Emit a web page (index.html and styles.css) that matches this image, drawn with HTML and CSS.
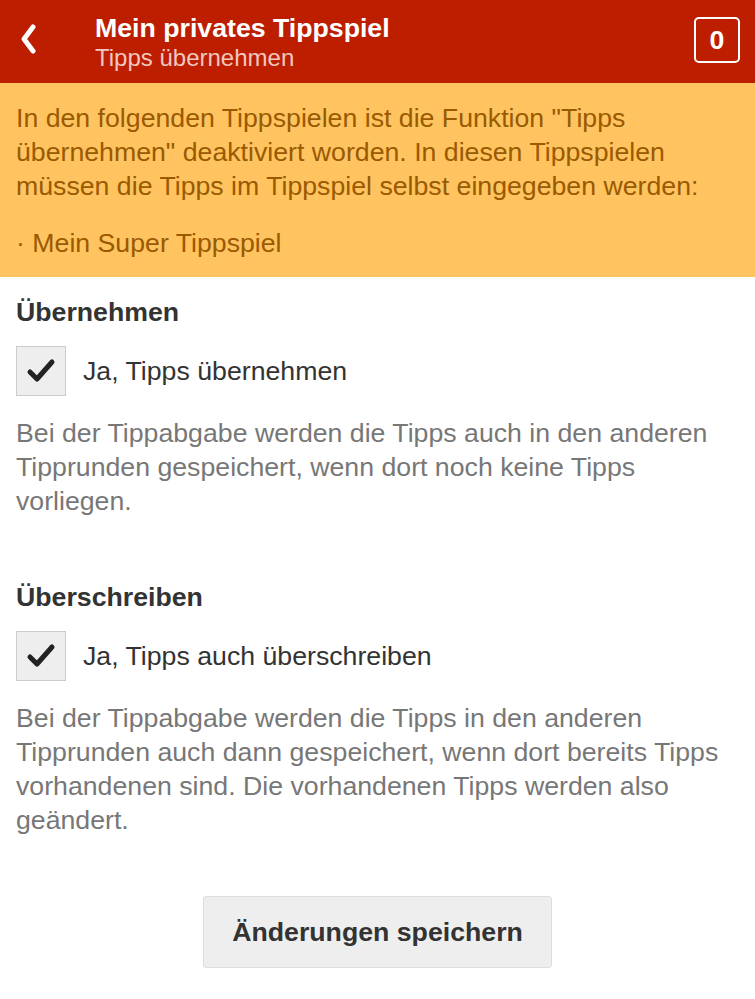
FILE: index.html
```html
<!DOCTYPE html>
<html lang="de">
<head>
    <meta charset="UTF-8" />
    <meta name="viewport" content="width=device-width, initial-scale=1.0" />
    <title>Tipps übernehmen</title>
    <link rel="stylesheet" href="styles.css">
</head>
<body>
    <div class="header">
        <a class="back" href="#">
            <svg width="18" height="32" viewBox="0 0 18 32"><path d="M14 4 L5 16 L14 28" fill="none" stroke="#fff" stroke-width="5" stroke-linecap="round" stroke-linejoin="round"/></svg>
        </a>
        <div class="titles">
            <div class="title">Mein privates Tippspiel</div>
            <div class="subtitle">Tipps übernehmen</div>
        </div>
        <div class="badge">0</div>
    </div>

    <div class="warning">
        <p>In den folgenden Tippspielen ist die Funktion "Tipps übernehmen" deaktiviert worden. In diesen Tippspielen müssen die Tipps im Tippspiel selbst eingegeben werden:</p>
        <p>· Mein Super Tippspiel</p>
    </div>

    <div class="section">
        <h2>Übernehmen</h2>
        <label class="check">
            <span class="box"><svg width="30" height="26" viewBox="0 0 30 26"><path d="M4 14 L11 21 L26 4" fill="none" stroke="#222" stroke-width="5" stroke-linecap="round" stroke-linejoin="round"/></svg></span>
            <span>Ja, Tipps übernehmen</span>
        </label>
        <p class="hint">Bei der Tippabgabe werden die Tipps auch in den anderen Tipprunden gespeichert, wenn dort noch keine Tipps vorliegen.</p>
    </div>

    <div class="section">
        <h2>Überschreiben</h2>
        <label class="check">
            <span class="box"><svg width="30" height="26" viewBox="0 0 30 26"><path d="M4 14 L11 21 L26 4" fill="none" stroke="#222" stroke-width="5" stroke-linecap="round" stroke-linejoin="round"/></svg></span>
            <span>Ja, Tipps auch überschreiben</span>
        </label>
        <p class="hint">Bei der Tippabgabe werden die Tipps in den anderen Tipprunden auch dann gespeichert, wenn dort bereits Tipps vorhandenen sind. Die vorhandenen Tipps werden also geändert.</p>
    </div>

    <div class="actions">
        <button class="save">Änderungen speichern</button>
    </div>
</body>
</html>
```

FILE: styles.css
```css
* {
    margin: 0;
    padding: 0;
    box-sizing: border-box;
}

body {
    font-family: "Liberation Sans", Arial, sans-serif;
    font-size: 26.7px;
    color: #333;
    background: #fff;
}

.header {
    height: 83px;
    background-color: #bd1e00;
    display: flex;
    align-items: center;
    padding: 0 15px 0 19px;
    color: #fff;
}

.back {
    display: flex;
    width: 76px;
    margin-top: -5px;
}

.titles {
    flex: 1;
}

.title {
    font-size: 26.7px;
    font-weight: bold;
    line-height: 32px;
}

.subtitle {
    font-size: 24px;
    line-height: 28px;
    color: #f2c7c0;
}

.badge {
    width: 46px;
    height: 46px;
    border: 2px solid #fff;
    border-radius: 5px;
    font-size: 26.7px;
    font-weight: bold;
    display: flex;
    align-items: center;
    justify-content: center;
    margin-top: -3px;
}

.warning {
    background-color: #ffc460;
    color: #9a5a00;
    padding: 18px 16px 17px;
    line-height: 34px;
}

.warning p + p {
    margin-top: 23px;
}

.section {
    padding: 18px 16px 0;
}

.section + .section {
    padding-top: 62px;
}

h2 {
    font-size: 26.7px;
    line-height: 34px;
}

.check {
    display: flex;
    align-items: center;
    gap: 17px;
    margin-top: 17px;
}

.box {
    width: 50px;
    height: 50px;
    background: #eee;
    border: 1px solid #ccc;
    display: flex;
    align-items: center;
    justify-content: center;
}

.hint {
    color: #777;
    line-height: 34px;
    margin-top: 20px;
}

.actions {
    display: flex;
    justify-content: center;
    padding-top: 59px;
}

.save {
    font-family: inherit;
    font-size: 26.7px;
    font-weight: bold;
    color: #333;
    background: #eee;
    border: 1px solid #ddd;
    border-radius: 3px;
    width: 349px;
    height: 72px;
}
```
